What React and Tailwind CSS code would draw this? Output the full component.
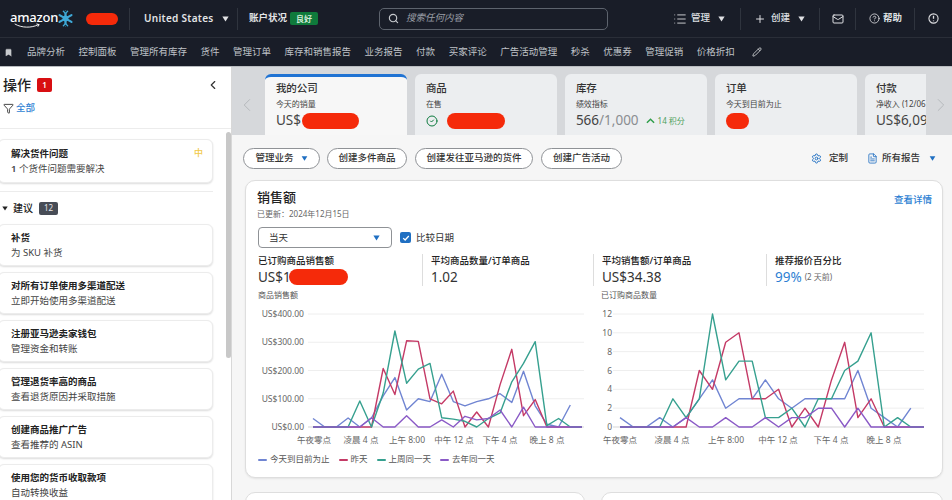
import React from 'react';
import { Bookmark, ChevronLeft, ChevronRight, CircleCheck, CircleHelp, Filter, FileText, List, Mail, Pencil, Plus, Search, Settings } from 'lucide-react';

const navItems = ['品牌分析', '控制面板', '管理所有库存', '货件', '管理订单', '库存和销售报告', '业务报告', '付款', '买家评论', '广告活动管理', '秒杀', '优惠券', '管理促销', '价格折扣'];

const suggestions = [
    ['补货', '为 SKU 补货'],
    ['对所有订单使用多渠道配送', '立即开始使用多渠道配送'],
    ['注册亚马逊卖家钱包', '管理资金和转账'],
    ['管理退货率高的商品', '查看退货原因并采取措施'],
    ['创建商品推广广告', '查看推荐的 ASIN'],
    ['使用您的货币收取款项', '自动转换收益'],
];

const seriesColors = { today: '#7085d2', yesterday: '#c43a66', lastWeek: '#36a08f', lastYear: '#8a5ac6' };

const salesData = {
    today: [30, 0, 0, 32, 0, 32, 110, 175, 60, 100, 90, 187, 90, 75, 90, 100, 118, 87, 197, 75, 10, 0, 78],
    yesterday: [0, 0, 0, 0, 0, 0, 207, 115, 305, 303, 100, 82, 127, 0, 53, 0, 150, 275, 40, 97, 0, 0, 0, 0],
    lastWeek: [0, 0, 0, 0, 92, 0, 120, 340, 155, 205, 225, 33, 28, 20, 0, 30, 50, 160, 225, 302, 5, 30, 0, 0],
    lastYear: [0, 0, 0, 0, 0, 33, 0, 0, 40, 0, 0, 25, 0, 38, 25, 30, 60, 0, 70, 0, 0, 0, 0, 0],
};

const unitsData = {
    today: [1, 0, 0, 1, 0, 1, 3, 5, 2, 3, 3, 5, 3, 2, 3, 3, 3, 3, 6, 2, 1, 0, 2],
    yesterday: [0, 0, 0, 0, 0, 0, 6, 4, 9, 10, 3, 3, 4, 0, 2, 0, 5, 9, 1, 3, 0, 0, 0, 0],
    lastWeek: [0, 0, 0, 0, 3, 1, 3, 12, 5, 7, 7, 1, 1, 2, 0, 3, 3, 6, 7, 10, 0, 1, 0, 0],
    lastYear: [0, 0, 0, 0, 0, 1, 0, 0, 1, 0, 0, 1, 0, 1, 1, 2, 2, 0, 2, 0, 0, 0, 0, 0],
};

const hourLabels = ['午夜零点', '凌晨 4 点', '上午 8:00', '中午 12 点', '下午 4 点', '晚上 8 点'];

const Caret = ({ className }) => (
    <svg viewBox="0 0 10 8" className={className} fill="currentColor">
        <path d="M0.5 0.5h9L5 7.5z" />
    </svg>
);

const Blob = ({ className }) => <span className={`block rounded-full bg-[#f52a0a] ${className}`} />;

const Snowflake = () => (
    <svg viewBox="0 0 20 20" className="w-[17px] h-[17px]" stroke="#3fa9d8" strokeWidth="2.6" strokeLinecap="round">
        <path d="M10 2v16M3 6l14 8M17 6L3 14" />
        <path d="M7.5 1.5L10 4l2.5-2.5M7.5 18.5L10 16l2.5 2.5" strokeWidth="1.6" />
        <circle cx="10" cy="10" r="3.4" fill="#3fa9d8" stroke="none" />
    </svg>
);

const TopBar = () => (
    <div className="h-[37px] bg-[#191d28] flex items-center text-white shrink-0">
        <div className="w-[129px] flex items-center pl-[10px] shrink-0">
            <div className="relative w-[44px] h-[22px]">
                <span className="block text-[13px] leading-[18px] font-medium tracking-[-0.2px]">amazon</span>
                <svg viewBox="0 0 40 8" className="absolute left-[4px] top-[15px] w-[28px] h-[6px]" fill="none" stroke="#fff" strokeWidth="1.3">
                    <path d="M1 1c10 6 24 6 34 1M32 1l4 1-2 3" />
                </svg>
            </div>
            <div className="ml-[3px] mr-[12px]"><Snowflake /></div>
            <Blob className="w-[32px] h-[12px] shrink-0" />
        </div>
        <div className="w-px h-[22px] bg-[#2f343e] shrink-0" />
        <div className="w-[107px] flex items-center pl-[14px] text-[10px] font-semibold text-[#e3e4e6] tracking-[0.3px] shrink-0">
            United States
            <Caret className="w-[7px] h-[6px] ml-[8px]" />
        </div>
        <div className="w-px h-[22px] bg-[#2f343e] shrink-0" />
        <div className="flex items-center pl-[11px] w-[141px] shrink-0">
            <span className="text-[9.5px] font-semibold text-[#e3e4e6]">账户状况</span>
            <span className="ml-[3px] w-[28px] h-[13px] rounded-[2px] bg-[#0f7a3b] text-[8px] font-semibold text-[#cfe9d7] flex items-center justify-center">良好</span>
        </div>
        <div className="w-[229px] h-[22px] rounded-[5px] border border-[#5d636d] flex items-center pl-[8px] shrink-0">
            <Search size={11} className="text-[#c5c8cc]" strokeWidth={2.5} />
            <span className="ml-[7px] text-[9.5px] italic text-[#9a9ea6]">搜索任何内容</span>
        </div>
        <div className="flex-1 flex items-center justify-end text-[9.5px] font-medium text-[#dfe0e3]">
            <List size={14} strokeWidth={1.5} />
            <span className="ml-[4px]">管理</span>
            <Caret className="w-[7px] h-[6px] ml-[8px]" />
            <div className="w-px h-[22px] bg-[#2f343e] ml-[15px]" />
            <Plus size={12} strokeWidth={2} className="ml-[13px]" />
            <span className="ml-[5px]">创建</span>
            <Caret className="w-[7px] h-[6px] ml-[8px]" />
            <div className="w-px h-[22px] bg-[#2f343e] ml-[14px]" />
            <Mail size={12} strokeWidth={2} className="ml-[12px]" />
            <div className="w-px h-[22px] bg-[#2f343e] ml-[11px]" />
            <CircleHelp size={11} strokeWidth={1.8} className="ml-[13px]" />
            <span className="ml-[3px] font-semibold">帮助</span>
            <div className="w-px h-[22px] bg-[#2f343e] ml-[12px]" />
            <svg viewBox="0 0 12 12" className="w-[11px] h-[11px] ml-[13px] mr-[13px]" fill="none" stroke="currentColor" strokeWidth="1.2">
                <circle cx="6" cy="6" r="5" />
                <path d="M6 3v3.4M6 8.2v.9" strokeWidth="1.4" />
            </svg>
        </div>
    </div>
);

const NavBar = () => (
    <div className="h-[29px] bg-[#191d28] border-t border-[#2a2e38] flex items-center pl-[4px] text-[9.5px] text-[#bfc2c7] shrink-0">
        <Bookmark size={9} fill="#c8cace" strokeWidth={1} className="text-[#c8cace]" />
        <div className="flex items-center gap-[13.5px] ml-[14px]">
            {navItems.map((item) => (
                <span key={item} className="whitespace-nowrap">{item}</span>
            ))}
        </div>
        <Pencil size={10} strokeWidth={2} className="ml-[17px] text-[#d5d7da]" />
    </div>
);

const ActionCard = ({ title, desc, tall, children }) => (
    <div className={`relative -ml-[2px] w-[215px] rounded-[6px] bg-white border border-[#ececec] shadow-[0_1px_2px_rgba(0,0,0,0.14)] pl-[12px] shrink-0 ${tall ? 'h-[44px] pt-[7px]' : 'h-[42px] pt-[6px]'}`}>
        <div className="text-[9.5px] leading-[14px] font-semibold text-[#222]">{title}</div>
        <div className="text-[9.5px] leading-[16px] text-[#444]">{desc}</div>
        {children}
    </div>
);

const Sidebar = () => (
    <aside className="w-[232px] h-full bg-white shrink-0 flex flex-col border-r border-[#d8d8d8]">
        <div className="h-[62px] border-b border-[#ececec] px-[3px] pt-[8px] shrink-0">
            <div className="flex items-center">
                <span className="text-[14px] leading-[20px] font-medium text-[#222]">操作</span>
                <span className="ml-[6px] w-[15px] h-[14px] rounded-[2px] bg-[#d80f12] text-white text-[8px] font-semibold flex items-center justify-center">1</span>
                <ChevronLeft size={14} strokeWidth={2} className="ml-auto mr-[8px] text-[#333]" />
            </div>
            <div className="flex items-center mt-[6px]">
                <Filter size={11} strokeWidth={1.8} className="text-[#222]" />
                <span className="ml-[2px] text-[9.5px] font-medium text-[#2d7fd3]">全部</span>
            </div>
        </div>
        <div className="flex-1 flex min-h-0">
            <div className="flex-1 pt-[10px] overflow-hidden">
                <ActionCard tall title="解决货件问题" desc={<><b className="font-semibold">1</b> 个货件问题需要解决</>}>
                    <span className="absolute right-[9px] top-[6px] text-[9px] font-medium text-[#f1c94b]">中</span>
                </ActionCard>
                <div className="w-[213px] h-px bg-[#ececec] mt-[8px]" />
                <div className="flex items-center h-[32px] pl-[2px]">
                    <Caret className="w-[6px] h-[5px] text-[#222]" />
                    <span className="ml-[5px] text-[10px] font-medium text-[#222]">建议</span>
                    <span className="ml-[6px] w-[19px] h-[13px] rounded-[2px] bg-[#474c56] text-[#e6e7e9] text-[8px] flex items-center justify-center">12</span>
                </div>
                <div className="flex flex-col gap-[6px]">
                    {suggestions.map(([title, desc]) => (
                        <ActionCard key={title} title={title} desc={desc} />
                    ))}
                </div>
            </div>
            <div className="w-[5px] mt-[3px] h-[226px] rounded-full bg-[#c8c8c8] shrink-0" />
        </div>
    </aside>
);

const MetricTab = ({ title, sub, active, children }) => (
    <div className={`w-[142px] h-[61px] rounded-t-[6px] pl-[11px] shrink-0 ${active ? 'bg-[#f7f7f7] border-t-[3px] border-[#2073d3] pt-[4px]' : 'bg-[#eceef0] pt-[7px]'}`}>
        <div className="text-[10.5px] leading-[15px] font-medium text-[#333]">{title}</div>
        <div className="text-[8px] leading-[12px] text-[#444] mt-[2px] whitespace-nowrap">{sub}</div>
        <div className="flex items-center h-[17px] mt-[2px] text-[13.5px] text-[#444] whitespace-nowrap">{children}</div>
    </div>
);

const TabStrip = () => (
    <div className="h-[68px] bg-[#d6d8db] flex items-end pl-[6px] shrink-0">
        <ChevronLeft size={28} strokeWidth={1} className="text-[#b2b5b9] w-[22px] mb-[16px] -ml-[2px] mr-[7px]" />
        <div className="flex gap-[8px] w-[665px] overflow-hidden">
            <MetricTab title="我的公司" sub="今天的销量" active>
                US$<Blob className="w-[57px] h-[16px] ml-[1px]" />
            </MetricTab>
            <MetricTab title="商品" sub="在售">
                <CircleCheck size={12} strokeWidth={2} className="text-[#0c7a3e]" />
                <Blob className="w-[58px] h-[16px] ml-[9px]" />
            </MetricTab>
            <MetricTab title="库存" sub="绩效指标">
                566<span className="text-[#8a8d91]">/1,000</span>
                <svg viewBox="0 0 10 6" className="w-[9px] h-[6px] ml-[7px]" fill="none" stroke="#2e9e4a" strokeWidth="1.6"><path d="M1 5l4-4 4 4" /></svg>
                <span className="ml-[3px] text-[8px] text-[#4a9e5a]">14 积分</span>
            </MetricTab>
            <MetricTab title="订单" sub="今天到目前为止">
                <Blob className="w-[23px] h-[16px]" />
            </MetricTab>
            <MetricTab title="付款" sub="净收入 (12/06 - 12/15)">
                US$6,094.27
            </MetricTab>
        </div>
        <ChevronRight size={28} strokeWidth={1} className="text-[#b2b5b9] w-[22px] mb-[16px] ml-[4px]" />
    </div>
);

const Pill = ({ children, className }) => (
    <div className={`h-[21px] rounded-full border border-[#8f9296] bg-white flex items-center justify-center text-[9.5px] font-medium text-[#333] shrink-0 ${className}`}>
        {children}
    </div>
);

const ActionRow = () => (
    <div className="h-[45px] flex items-center pl-[11px] pt-[1px] shrink-0">
        <Pill className="w-[77px] gap-[7px]">管理业务<Caret className="w-[7px] h-[5px] text-[#1f6fc2]" /></Pill>
        <Pill className="w-[80px] ml-[7px]">创建多件商品</Pill>
        <Pill className="w-[118px] ml-[8px]">创建发往亚马逊的货件</Pill>
        <Pill className="w-[81px] ml-[8px]">创建广告活动</Pill>
        <div className="ml-auto flex items-center text-[9.5px] font-medium text-[#333] pr-[16px]">
            <Settings size={11} strokeWidth={2} className="text-[#1f6fc2]" />
            <span className="ml-[7px]">定制</span>
            <FileText size={11} strokeWidth={1.8} className="ml-[19px] text-[#1f6fc2]" />
            <span className="ml-[4px]">所有报告</span>
            <Caret className="w-[7px] h-[5px] ml-[9px] text-[#1f6fc2]" />
        </div>
    </div>
);

const Metric = ({ label, divider, children }) => (
    <div className={`relative h-[32px] ${divider ? 'pl-[8px] border-l border-[#dddddd]' : ''}`}>
        <div className="text-[9.5px] leading-[13px] font-medium text-[#222] whitespace-nowrap">{label}</div>
        <div className="flex items-center h-[18px] mt-[1px] text-[13.5px] text-[#333] whitespace-nowrap">{children}</div>
    </div>
);

// line chart drawn in its own pixel box, plotLeft/plotRight mark the first and last hour
const LineChart = ({ data, max, ticks, formatTick, width, plotLeft, plotRight, gridLeft, gridRight, tickX, labelX }) => {
    const top = 14;
    const bottom = 127;
    const step = (plotRight - plotLeft) / 23;
    const toPoints = (values) =>
        values.map((v, i) => `${(plotLeft + i * step).toFixed(1)},${(bottom - (v / max) * (bottom - top)).toFixed(1)}`).join(' ');

    return (
        <svg width={width} height={148} className="block overflow-visible" fontFamily='"Noto Sans","Noto Sans CJK SC",sans-serif'>
            {ticks.map((t) => {
                const y = bottom - (t / max) * (bottom - top);
                return (
                    <g key={t}>
                        <line x1={gridLeft} x2={gridRight} y1={y} y2={y} stroke={t === 0 ? '#d5d5d5' : '#eeeeee'} />
                        <text x={tickX} y={y + 3} textAnchor="end" fontSize="8.5" fill="#666">{formatTick(t)}</text>
                    </g>
                );
            })}
            {hourLabels.map((label, i) => (
                <text key={label} x={labelX[i]} y={143} textAnchor="middle" fontSize="8.5" fill="#666">{label}</text>
            ))}
            {['today', 'yesterday', 'lastWeek', 'lastYear'].map((key) => (
                <polyline key={key} points={toPoints(data[key])} fill="none" stroke={seriesColors[key]} strokeWidth="1.4" strokeLinejoin="round" />
            ))}
        </svg>
    );
};

const Legend = () => (
    <div className="flex items-center gap-[9px] mt-[5px] text-[8.5px] text-[#555]">
        {[['今天到目前为止', seriesColors.today], ['昨天', seriesColors.yesterday], ['上周同一天', seriesColors.lastWeek], ['去年同一天', seriesColors.lastYear]].map(([label, color]) => (
            <div key={label} className="flex items-center gap-[3px]">
                <span className="w-[9px] h-[2px] rounded-full" style={{ backgroundColor: color }} />
                {label}
            </div>
        ))}
    </div>
);

const SalesCard = () => (
    <div className="relative h-[298px] ml-[13px] mr-[9px] bg-white rounded-[10px] border border-[#dedede] shadow-[0_1px_2px_rgba(0,0,0,0.08)] pl-[11px] pt-[6px] shrink-0 overflow-hidden">
        <div className="flex items-start justify-between pr-[10px]">
            <div className="text-[13px] leading-[20px] font-medium text-[#222]">销售额</div>
            <div className="text-[9.5px] font-medium text-[#2d7fd3] pt-[6px]">查看详情</div>
        </div>
        <div className="text-[8px] leading-[12px] text-[#666] mt-[1px]">已更新：2024年12月15日</div>
        <div className="flex items-center mt-[7px] ml-[1px]">
            <div className="w-[134px] h-[21px] rounded-[4px] border border-[#8f9296] flex items-center justify-between pl-[10px] pr-[11px] text-[9.5px] text-[#333]">
                当天
                <Caret className="w-[7px] h-[6px] text-[#1f6fc2]" />
            </div>
            <span className="ml-[8px] w-[11px] h-[11px] rounded-[2px] bg-[#1f6fc2] flex items-center justify-center">
                <svg viewBox="0 0 10 10" className="w-[8px] h-[8px]" fill="none" stroke="#fff" strokeWidth="1.6"><path d="M1.5 5.2l2.4 2.3 4.6-5" /></svg>
            </span>
            <span className="ml-[5px] text-[9.5px] text-[#333]">比较日期</span>
        </div>
        <div className="grid grid-cols-[164px_171px_173px_1fr] ml-[1px] mt-[6px] h-[32px]">
            <Metric label="已订购商品销售额">
                US$1<Blob className="w-[59px] h-[16px] -ml-[2px]" />
            </Metric>
            <Metric label="平均商品数量/订单商品" divider>1.02</Metric>
            <Metric label="平均销售额/订单商品" divider>US$34.38</Metric>
            <Metric label="推荐报价百分比" divider>
                <span className="text-[#2d7fd3]">99%</span>
                <span className="ml-[3px] text-[8px] text-[#666]">(2 天前)</span>
            </Metric>
        </div>
        <div className="grid grid-cols-[343px_1fr] mt-[3px] ml-[1px]">
            <div>
                <div className="text-[8px] leading-[11px] text-[#555]">商品销售额</div>
                <LineChart
                    data={salesData}
                    max={400}
                    ticks={[0, 100, 200, 300, 400]}
                    formatTick={(t) => `US$${t}.00`}
                    width={335}
                    plotLeft={55}
                    plotRight={324}
                    gridLeft={50}
                    gridRight={326}
                    tickX={46}
                    labelX={[56, 103, 149, 196, 242, 289]}
                />
                <Legend />
            </div>
            <div>
                <div className="text-[8px] leading-[11px] text-[#555]">已订购商品数量</div>
                <LineChart
                    data={unitsData}
                    max={12}
                    ticks={[0, 2, 4, 6, 8, 10, 12]}
                    formatTick={(t) => `${t}`}
                    width={335}
                    plotLeft={19}
                    plotRight={323}
                    gridLeft={12}
                    gridRight={323}
                    tickX={11}
                    labelX={[19, 71, 125, 177, 230, 283]}
                />
            </div>
        </div>
    </div>
);

export default function App() {
    return (
        <div className="w-[952px] h-[500px] overflow-hidden flex flex-col bg-[#f6f6f6] font-['Noto_Sans','Noto_Sans_CJK_SC',sans-serif]">
            <TopBar />
            <NavBar />
            <div className="flex-1 flex min-h-0 border-t border-[#b9bcc0]">
                <Sidebar />
                <main className="flex-1 min-w-0 flex flex-col">
                    <TabStrip />
                    <ActionRow />
                    <SalesCard />
                    <div className="grid grid-cols-[340px_342px] gap-[16px] ml-[13px] mt-[14px]">
                        <div className="h-[40px] bg-white rounded-t-[10px] border border-[#dedede]" />
                        <div className="h-[40px] bg-white rounded-t-[10px] border border-[#dedede]" />
                    </div>
                </main>
            </div>
        </div>
    );
}
